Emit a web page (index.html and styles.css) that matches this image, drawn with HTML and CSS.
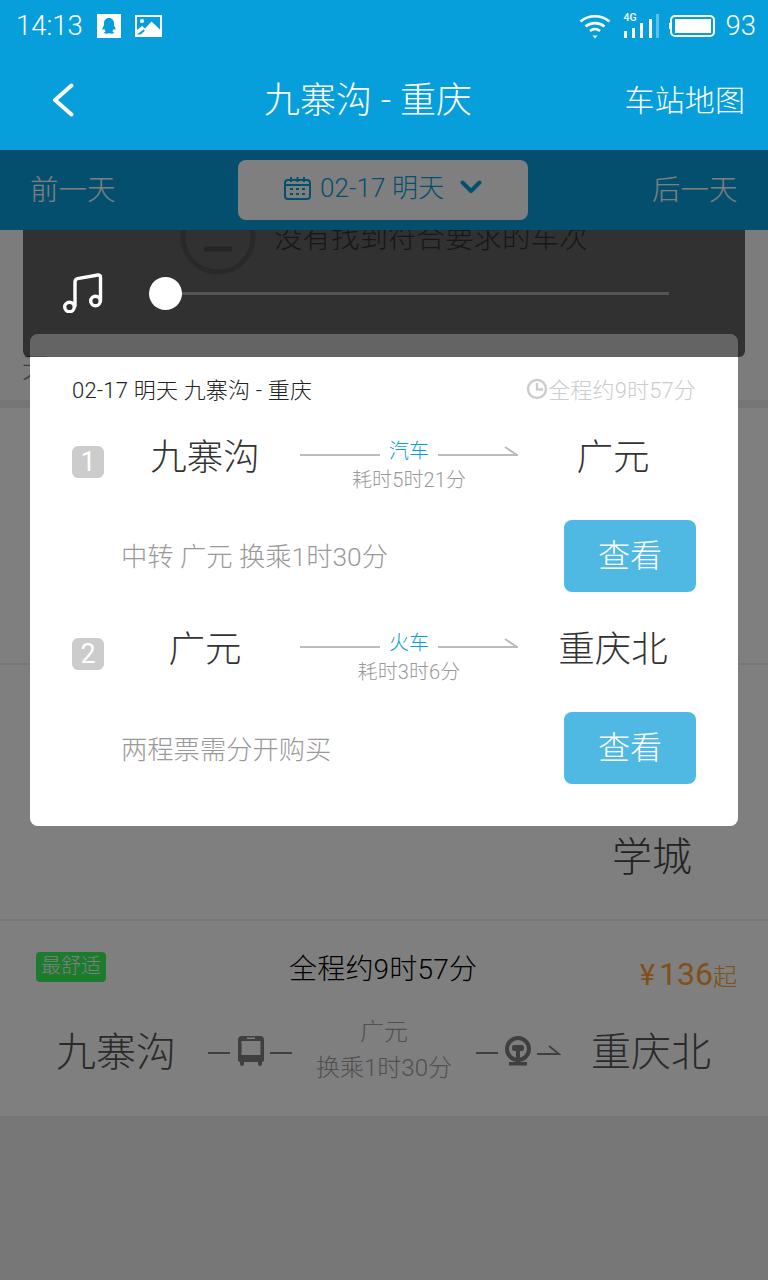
FILE: index.html
```html
<!DOCTYPE html>
<html lang="zh-CN">
<head>
<meta charset="utf-8">
<title>九寨沟 - 重庆</title>
<link rel="stylesheet" href="styles.css">
</head>
<body>
<div class="phone">
  <div class="topbar">
    <div class="status">
      <div class="status-side">
        <span class="status-text">14:13</span>
        <svg class="ic-qq" viewBox="0 0 24 24"><rect width="24" height="24" fill="#fff"/><path d="M12 4c-3.400 0-5 2.600-5 5.400v2.200c-1 1.400-1.800 3-1.500 4.300.5.300 1.200-.4 1.700-1.100.3 1.100.9 2 1.500 2.600-1 .4-1.800.9-1.600 1.600.3.800 2.800.8 4.900.3 2.100.5 4.600.5 4.900-.3.2-.7-.6-1.200-1.600-1.600.6-.6 1.200-1.500 1.500-2.600.5.700 1.200 1.400 1.700 1.100.3-1.300-.5-2.900-1.500-4.300V9.400C17 6.600 15.400 4 12 4z" fill="#069fdb"/></svg>
        <svg class="ic-pic" viewBox="0 0 27 22"><path fill-rule="evenodd" d="M0 0h27v22H0zM2 2v13l5-4 3 2.500L16.500 6.500 25 14.500V2z" fill="#fff"/><circle cx="7" cy="6" r="2" fill="#fff"/><path d="M2 19.500l6.500-5 1.500 1.200-4.500 3.800z" fill="#069fdb"/></svg>
      </div>
      <div class="status-side">
        <svg class="ic-wifi" viewBox="0 0 32 26" fill="none" stroke="#fff" stroke-width="2.600"><path d="M1.500 8.500C9.500 1.500 22.500 1.500 30.500 8.500"/><path d="M6.500 13.500c5.500-4.500 13.500-4.500 19 0"/><path d="M11 18c3-2.400 7-2.400 10 0"/><path d="M13.500 22.500h5L16 25.500z" fill="#fff" stroke="none"/></svg>
        <span class="signal">
          <span class="signal-label">4G</span>
          <svg class="ic-bars" viewBox="0 0 36 24" fill="#fff"><rect x="1" y="17" width="3" height="7"/><rect x="9" y="14" width="3" height="10"/><rect x="17" y="9" width="3" height="15"/><rect x="26" y="5" width="3" height="19"/><rect x="33" y="0" width="3" height="24" opacity=".35"/></svg>
        </span>
        <svg class="ic-batt" viewBox="0 0 46 22"><rect x="2" y="1" width="43" height="20" rx="4" fill="none" stroke="#fff" stroke-width="2"/><rect x="6" y="4" width="36" height="14" fill="#fff"/><rect x="0" y="8" width="2" height="6" fill="#fff"/></svg>
        <span class="status-text">93</span>
      </div>
    </div>
    <header class="header">
      <svg class="ic-back" viewBox="0 0 22 34" fill="none" stroke="#fff" stroke-width="4" stroke-linecap="round" stroke-linejoin="round"><path d="M19.500 2.500L3 17l16.500 14.500"/></svg>
      <h1 class="title">九寨沟 - 重庆</h1>
      <span class="header-link">车站地图</span>
    </header>
  </div>

  <nav class="datebar">
    <span class="day-link">前一天</span>
    <div class="date-pick">
      <svg class="ic-cal" viewBox="0 0 27 23" fill="none" stroke="#069fdb" stroke-width="2"><rect x="1" y="3" width="25" height="19" rx="3"/><path d="M7 0v5M13.500 0v5M20 0v5M1 8h25" /><path d="M6 12h3M12 12h3M18 12h3M6 17h3M12 17h3M18 17h3" stroke-width="2.200"/></svg>
      <span class="date-text">02-17 明天</span>
      <svg class="ic-down" viewBox="0 0 22 14" fill="none" stroke="#069fdb" stroke-width="4" stroke-linecap="round" stroke-linejoin="round"><path d="M2.500 2.500L11 11l8.500-8.500"/></svg>
    </div>
    <span class="day-link">后一天</span>
  </nav>

  <main class="list">
    <section class="empty">
      <div class="empty-msg">
        <svg class="ic-face" viewBox="0 0 76 76" fill="none" stroke="#ccc" stroke-width="5"><circle cx="38" cy="38" r="35"/><path d="M24 50h28" stroke="#bbb"/></svg>
        <span class="empty-text">没有找到符合要求的车次</span>
      </div>
      <div class="empty-note">无</div>
    </section>
    <section class="card card-a"></section>
    <section class="card card-b"><span class="card-b-name">学城</span></section>
    <section class="card card-c">
      <div class="plan-head">
        <span class="tag">最舒适</span>
        <span class="plan-time">全程约9时57分</span>
        <span class="price"><span class="yen">¥</span><span class="amount">136</span><span class="qi">起</span></span>
      </div>
      <div class="plan-route">
        <span class="plan-stop">九寨沟</span>
        <span class="dash dash-first"></span>
        <svg class="ic-bus" viewBox="0 0 26 30" fill="#7f7f7f"><path fill-rule="evenodd" d="M4 0h18a4 4 0 0 1 4 4v20a2 2 0 0 1-2 2v2a2 2 0 0 1-4 0v-2H6v2a2 2 0 0 1-4 0v-2a2 2 0 0 1-2-2V4a4 4 0 0 1 4-4zM3.500 5v14h19V5zM9 1.500v1.500h8V1.500z"/></svg>
        <span class="dash"></span>
        <div class="plan-via"><span class="via-name">广元</span><span class="via-time">换乘1时30分</span></div>
        <span class="dash"></span>
        <svg class="ic-rail" viewBox="0 0 28 30" fill="#7f7f7f"><circle cx="14" cy="13" r="11" fill="none" stroke="#7f7f7f" stroke-width="4"/><rect x="8" y="9" width="12" height="6" rx="2"/><rect x="12" y="14" width="4" height="13"/><rect x="5" y="26" width="18" height="3.500"/></svg>
        <svg class="ic-arrow-end" viewBox="0 0 24 12" fill="none" stroke="#7f7f7f" stroke-width="1.800"><path d="M0 11h22L12 3"/></svg>
        <span class="plan-stop plan-stop-end">重庆北</span>
      </div>
    </section>
  </main>

  <div class="scrim"></div>

  <div class="player">
    <svg class="ic-music" viewBox="0 0 40 40" fill="none" stroke="#fff" stroke-width="3.400" stroke-linecap="round" stroke-linejoin="round"><path d="M12 33V9c0-2 .8-3 2.500-3.400L35 2c1.500-.2 2.500 .6 2.500 2v24"/><circle cx="6.500" cy="34" r="4.800"/><circle cx="32.500" cy="28" r="4.800"/></svg>
    <div class="track"><span class="knob"></span></div>
  </div>

  <div class="modal">
    <div class="modal-body">
      <div class="modal-head">
        <span class="modal-title">02-17 明天 九寨沟 - 重庆</span>
        <span class="modal-total">
          <svg class="ic-clock" viewBox="0 0 22 22" fill="none" stroke="#ccc" stroke-width="2.400"><circle cx="11" cy="11" r="9"/><path d="M11 5v6.500h6"/></svg>全程约9时57分
        </span>
      </div>

      <div class="leg">
        <span class="badge">1</span>
        <span class="stop">九寨沟</span>
        <div class="link">
          <div class="link-line">
            <span class="rule"></span>
            <span class="mode">汽车</span>
            <svg class="rule-arrow" viewBox="0 0 80 10" fill="none" stroke="#bbb" stroke-width="2"><path d="M0 9h79L67 1"/></svg>
          </div>
          <span class="duration">耗时5时21分</span>
        </div>
        <span class="stop">广元</span>
      </div>
      <div class="leg-foot">
        <span class="note">中转 广元 换乘1时30分</span>
        <button class="view-btn"><span class="view-label">查看</span></button>
      </div>

      <div class="leg leg-next">
        <span class="badge">2</span>
        <span class="stop">广元</span>
        <div class="link">
          <div class="link-line">
            <span class="rule"></span>
            <span class="mode">火车</span>
            <svg class="rule-arrow" viewBox="0 0 80 10" fill="none" stroke="#bbb" stroke-width="2"><path d="M0 9h79L67 1"/></svg>
          </div>
          <span class="duration">耗时3时6分</span>
        </div>
        <span class="stop">重庆北</span>
      </div>
      <div class="leg-foot leg-foot-last">
        <span class="note">两程票需分开购买</span>
        <button class="view-btn"><span class="view-label">查看</span></button>
      </div>
    </div>
  </div>
</div>
</body>
</html>
```
FILE: styles.css
```css
* { box-sizing: border-box; }
html, body { margin: 0; padding: 0; }
body {
  font-family: Roboto, "Noto Sans CJK SC", sans-serif;
  font-weight: 300;
  background: #eee;
}
.phone {
  position: relative;
  width: 768px;
  height: 1280px;
  overflow: hidden;
  background: #eee;
  display: flex;
  flex-direction: column;
}

/* top */
.topbar { background: #069fdb; color: #fff; position: relative; z-index: 5; }
.status {
  height: 50px;
  padding: 2px 12px 0 16px;
  display: flex;
  justify-content: space-between;
  align-items: center;
}
.status-side { display: flex; align-items: center; }
.status-text { font-size: 27.500px; line-height: 48px; font-weight: 300; }
.ic-qq { width: 24px; height: 24px; margin-left: 14px; }
.ic-pic { width: 27px; height: 22px; margin-left: 14px; }
.ic-wifi { width: 32px; height: 26px; margin-right: 12px; }
.signal { position: relative; width: 36px; height: 24px; margin-right: 10px; }
.signal-label {
  position: absolute; left: 0; top: -1px;
  font-size: 10.500px; line-height: 10px; font-weight: 500;
}
.ic-bars { width: 36px; height: 24px; display: block; }
.ic-batt { width: 46px; height: 22px; margin-right: 10px; }
.header {
  height: 100px;
  position: relative;
  display: flex;
  align-items: center;
  justify-content: space-between;
  padding: 0 23px 0 52px;
}
.ic-back { width: 22px; height: 34px; }
.title {
  position: absolute;
  left: 0; right: 32px; top: 0;
  margin: 0;
  text-align: center;
  font-size: 36px;
  font-weight: 300;
  line-height: 102px;
}
.header-link { font-size: 30px; line-height: 100px; letter-spacing: .1px; padding-top: 1px; }

/* date bar */
.datebar {
  height: 80px;
  flex: none;
  background: #069fdb;
  display: flex;
  align-items: center;
  justify-content: space-between;
  padding: 0 30px;
  position: relative;
  z-index: 1;
}
.day-link { font-size: 28.500px; color: #fff; width: 86px; margin-bottom: 6px; white-space: nowrap; }
.date-pick {
  width: 290px;
  height: 60px;
  margin-right: 2px;
  background: #fff;
  border-radius: 8px;
  display: flex;
  align-items: center;
  padding-left: 46px;
  color: #069fdb;
}
.ic-cal { width: 27px; height: 23px; margin-bottom: 4px; }
.date-text { font-size: 26px; margin: 0 0 10px 9px; letter-spacing: .1px; }
.ic-down { width: 22px; height: 14px; margin: 0 0 6px 16px; }

/* list behind */
.list { flex: 1; display: flex; flex-direction: column; overflow: hidden; }
.empty {
  height: 178px;
  flex: none;
  background: #f8f8f8;
  border-bottom: 8px solid #ececec;
  overflow: hidden;
}
.empty-msg {
  display: flex;
  align-items: center;
  margin: -31px 0 0 180px;
  height: 76px;
}
.ic-face { width: 76px; height: 76px; }
.empty-text { margin: 0 0 4px 18px; font-size: 28.500px; color: #777; }
.empty-note { margin: 74px 0 0 22px; font-size: 28px; line-height: 40px; color: #777; }
.card { background: #fff; border-bottom: 2px solid #eee; flex: none; }
.card-a { height: 257px; }
.card-b {
  height: 256px;
  display: flex;
  justify-content: flex-end;
  padding: 164px 76px 0 0;
}
.card-b-name { font-size: 40px; line-height: 58px; color: #444; }
.card-c { height: 195px; padding: 31px 31px 0 36px; border-bottom: 0; }
.plan-head { display: flex; justify-content: space-between; align-items: flex-start; position: relative; height: 42px; }
.tag {
  width: 70px; height: 30px;
  background: #38f85c;
  border-radius: 4px;
  color: #fff;
  font-size: 20px;
  line-height: 28px;
  text-align: center;
}
.plan-time {
  position: absolute;
  left: 253px;
  top: 0;
  font-size: 28px;
  line-height: 36px;
  letter-spacing: .2px;
  color: #000;
}
.price { color: #ffa030; display: flex; align-items: baseline; line-height: 40px; font-weight: 400; margin-top: 2px; }
.yen { font-size: 29px; margin-right: 4px; }
.amount { font-size: 32px; }
.qi { font-size: 24px; font-weight: 300; }
.plan-route {
  display: flex;
  align-items: center;
  margin: 18px 0 0 20px;
  height: 82px;
}
.plan-stop { font-size: 40px; color: #555; width: 120px; line-height: 58px; white-space: nowrap; }
.plan-stop-end { margin-left: 30px; }
.dash { width: 22px; height: 2px; background: #808080; }
.dash-first { margin-left: 32px; }
.ic-bus { width: 26px; height: 30px; margin: 0 6px 4px 8px; }
.plan-via {
  width: 184px;
  margin-bottom: 7px;
  display: flex;
  flex-direction: column;
  align-items: center;
  color: #a0a0a0;
  font-size: 24px;
  line-height: 36px;
}
.ic-rail { width: 28px; height: 30px; margin: 0 5px 4px 6px; }
.ic-arrow-end { width: 24px; height: 12px; margin-bottom: 8px; }

/* overlay */
.scrim {
  position: absolute;
  left: 0; right: 0; top: 150px; bottom: 0;
  background: rgba(0, 0, 0, .5);
  z-index: 2;
}
.player {
  position: absolute;
  left: 23px;
  top: 230px;
  width: 722px;
  height: 127px;
  background: rgba(0, 0, 0, .6);
  border-radius: 0 0 6px 6px;
  z-index: 3;
  display: flex;
  align-items: flex-start;
  padding: 43px 0 0 40px;
}
.ic-music { width: 40px; height: 40px; }
.track {
  position: relative;
  margin: 19px 0 0 50px;
  width: 516px;
  height: 3px;
  background: #555;
}
.knob {
  position: absolute;
  left: -4px;
  top: -15px;
  width: 33px;
  height: 33px;
  border-radius: 50%;
  background: #fff;
}
.modal {
  position: absolute;
  left: 30px;
  top: 334px;
  width: 708px;
  height: 492px;
  padding-top: 23px;
  background: rgba(255, 255, 255, .25);
  border-radius: 8px;
  z-index: 4;
  overflow: hidden;
}
.modal-body { background: #fff; height: 100%; padding: 0 42px; }
.modal-head {
  height: 62px;
  margin-bottom: 4px;
  display: flex;
  justify-content: space-between;
  align-items: center;
}
.modal-title { font-size: 22px; color: #222; letter-spacing: .2px; }
.modal-total { font-size: 22px; color: #ccc; display: flex; align-items: center; letter-spacing: .15px; }
.ic-clock { width: 22px; height: 22px; margin-top: 2px; }
.leg {
  display: grid;
  grid-template-columns: 38px 166px 218px 166px;
  column-gap: 12px;
  height: 97px;
  align-items: start;
}
.leg-next { margin-top: 23px; }
.badge {
  width: 32px; height: 32px;
  margin-top: 23px;
  border-radius: 6px;
  background: #ccc;
  color: #fff;
  font-size: 27px;
  line-height: 32px;
  text-align: center;
  font-weight: 400;
}
.stop { font-size: 36.500px; line-height: 70px; color: #333; text-align: center; }
.link { display: flex; flex-direction: column; align-items: center; padding-top: 13px; }
.link-line { display: flex; width: 100%; align-items: flex-start; justify-content: space-between; height: 30px; }
.rule { width: 80px; height: 2px; margin-top: 18px; background: #bbb; }
.rule-arrow { width: 80px; height: 10px; margin-top: 10px; }
.mode { font-size: 20px; line-height: 30px; color: #069fdb; }
.duration { font-size: 20px; line-height: 24px; color: #999; margin-top: 2px; letter-spacing: .1px; }
.leg-foot {
  height: 72px;
  display: flex;
  justify-content: space-between;
  align-items: center;
  padding-left: 49px;
}
.note { font-size: 26.300px; color: #999; margin-bottom: 4px; }
.leg-foot-last .note { margin-bottom: 2px; }
.view-btn {
  width: 132px;
  height: 72px;
  padding: 0 0 6px;
  border: 0;
  border-radius: 8px;
  background: #4fb9e3;
  color: #fff;
  font-family: inherit;
  font-weight: 300;
  font-size: 32px;
}
.view-label { display: block; }
```
